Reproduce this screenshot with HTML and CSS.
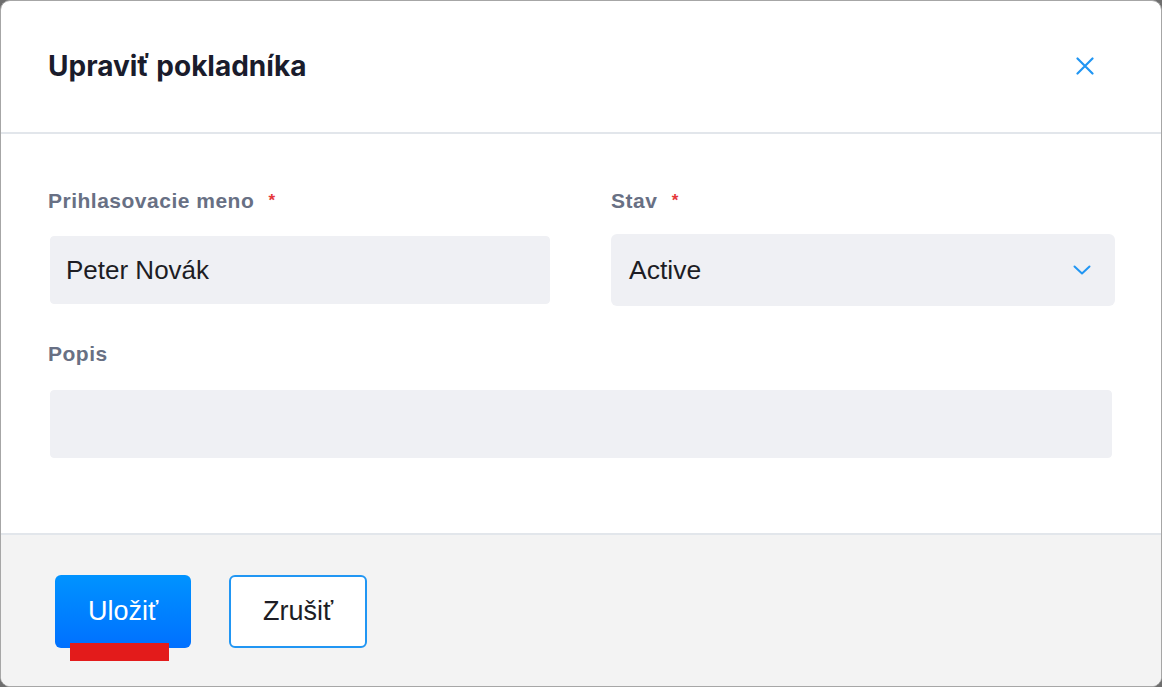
FILE: index.html
```html
<!DOCTYPE html>
<html lang="sk">
<head>
<meta charset="utf-8">
<title>Upraviť pokladníka</title>
<link rel="stylesheet" href="styles.css">
</head>
<body>
<div class="modal">
  <header class="modal-header">
    <h1 class="modal-title">Upraviť pokladníka</h1>
    <button class="close-btn" aria-label="Zavrieť">
      <svg width="18" height="18" viewBox="0 0 18 18"><path d="M1.5 1.5 L16.5 16.5 M16.5 1.5 L1.5 16.5" stroke="#2196f3" stroke-width="2.2" stroke-linecap="round" fill="none"/></svg>
    </button>
  </header>
  <main class="modal-body">
    <div class="row">
      <div class="field">
        <label class="label">Prihlasovacie meno <span class="req">*</span></label>
        <div class="input">Peter Novák</div>
      </div>
      <div class="field">
        <label class="label">Stav <span class="req">*</span></label>
        <div class="select">
          <span>Active</span>
          <svg width="18" height="10" viewBox="0 0 18 10"><path d="M1.5 1.5 L9 8.5 L16.5 1.5" stroke="#2196f3" stroke-width="2" stroke-linecap="round" stroke-linejoin="round" fill="none"/></svg>
        </div>
      </div>
    </div>
    <div class="field full">
      <label class="label">Popis</label>
      <div class="input textarea"></div>
    </div>
  </main>
  <footer class="modal-footer">
    <button class="btn btn-primary">Uložiť<span class="marker"></span></button>
    <button class="btn btn-secondary">Zrušiť</button>
  </footer>
</div>
</body>
</html>
```
FILE: styles.css
```css
html, body {
  margin: 0;
  padding: 0;
  height: 687px;
  background: #6e6e6e;
}
.modal {
  box-sizing: border-box;
  width: 1162px;
  height: 687px;
  border: 1px solid #a6a6a6;
  border-radius: 10px;
  overflow: hidden;
  background: #fff;
  display: flex;
  flex-direction: column;
  font-family: "Liberation Sans", Arial, sans-serif;
}
.modal-header {
  box-sizing: border-box;
  height: 133px;
  flex: none;
  border-bottom: 2px solid #e2e6eb;
  display: flex;
  align-items: center;
  justify-content: space-between;
  padding: 0 67px 2px 47px;
}
.modal-title {
  margin: 0;
  font-family: Inter, sans-serif;
  font-weight: 700;
  font-size: 28px;
  color: #1a1c2c;
}
.close-btn {
  background: none;
  border: none;
  padding: 0;
  width: 18px;
  height: 18px;
  display: flex;
}
.modal-body {
  flex: 1;
  padding: 56px 47px 0 47px;
  display: flex;
  flex-direction: column;
}
.row {
  display: grid;
  grid-template-columns: 504px 504px;
  column-gap: 59px;
}
.field {
  display: flex;
  flex-direction: column;
}
.field.full {
  margin-top: 37px;
}
.label {
  font-family: "Liberation Sans", Arial, sans-serif;
  font-weight: 700;
  font-size: 21px;
  letter-spacing: 0.5px;
  color: #687084;
  height: 22px;
  line-height: 22px;
  margin-bottom: 22px;
}
.full .label {
  margin-bottom: 23px;
}
.req {
  color: #e5383b;
  font-size: 17px;
  vertical-align: 2px;
  margin-left: 8px;
}
.input {
  box-sizing: border-box;
  height: 72px;
  border: 2px solid #fff;
  background: #eff0f4;
  border-radius: 6px;
  background-clip: padding-box;
  padding: 0 16px;
  display: flex;
  align-items: center;
  font-size: 26px;
  color: #1d1d24;
}
.select {
  box-sizing: border-box;
  height: 72px;
  background: #eff0f4;
  border-radius: 6px;
  padding: 0 24px 0 18px;
  display: flex;
  align-items: center;
  justify-content: space-between;
  font-size: 26.5px;
  color: #1d1d24;
}
.textarea {
  height: 72px;
}
.modal-footer {
  box-sizing: border-box;
  height: 153px;
  flex: none;
  border-top: 2px solid #e2e6eb;
  background: #f3f3f3;
  display: flex;
  align-items: flex-start;
  padding: 40px 0 0 54px;
  gap: 38px;
}
.btn {
  box-sizing: border-box;
  height: 73px;
  font-family: "Liberation Sans", Arial, sans-serif;
  font-size: 27px;
  border-radius: 6px;
  cursor: pointer;
}
.btn-primary {
  position: relative;
  width: 136px;
  border: none;
  color: #fff;
  background: linear-gradient(180deg, #0093ff 0%, #0070ff 100%);
}
.marker {
  position: absolute;
  left: 15px;
  top: 68px;
  width: 99px;
  height: 18px;
  background: #e31b1b;
}
.btn-secondary {
  width: 138px;
  background: #fff;
  border: 2px solid #2196f3;
  color: #1d1d24;
}
```
